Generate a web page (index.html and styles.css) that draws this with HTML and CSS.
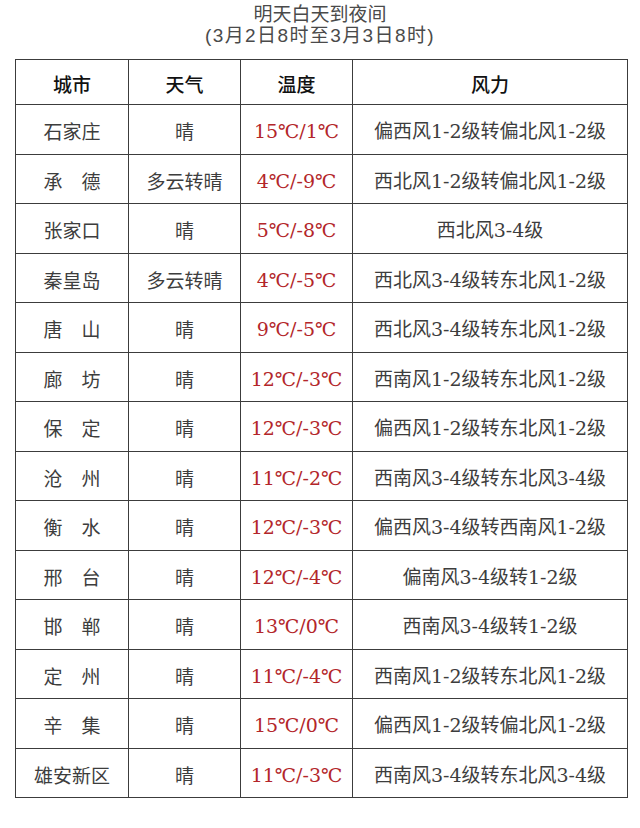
FILE: index.html
```html
<!DOCTYPE html>
<html lang="zh-CN">
<head>
<meta charset="utf-8">
<title>明天白天到夜间</title>
<link rel="stylesheet" href="styles.css">
</head>
<body>
<div class="title">
  <div class="title-main">明天白天到夜间</div>
  <div class="title-sub">(3月2日8时至3月3日8时)</div>
</div>
<table class="weather">
  <colgroup>
    <col class="c-city"><col class="c-sky"><col class="c-temp"><col class="c-wind">
  </colgroup>
  <thead>
    <tr class="head"><th>城市</th><th>天气</th><th>温度</th><th>风力</th></tr>
  </thead>
  <tbody>
    <tr><td>石家庄</td><td>晴</td><td class="temp">15℃/1℃</td><td>偏西风1-2级转偏北风1-2级</td></tr>
    <tr><td>承　德</td><td>多云转晴</td><td class="temp">4℃/-9℃</td><td>西北风1-2级转偏北风1-2级</td></tr>
    <tr><td>张家口</td><td>晴</td><td class="temp">5℃/-8℃</td><td>西北风3-4级</td></tr>
    <tr><td>秦皇岛</td><td>多云转晴</td><td class="temp">4℃/-5℃</td><td>西北风3-4级转东北风1-2级</td></tr>
    <tr><td>唐　山</td><td>晴</td><td class="temp">9℃/-5℃</td><td>西北风3-4级转东北风1-2级</td></tr>
    <tr><td>廊　坊</td><td>晴</td><td class="temp">12℃/-3℃</td><td>西南风1-2级转东北风1-2级</td></tr>
    <tr><td>保　定</td><td>晴</td><td class="temp">12℃/-3℃</td><td>偏西风1-2级转东北风1-2级</td></tr>
    <tr><td>沧　州</td><td>晴</td><td class="temp">11℃/-2℃</td><td>西南风3-4级转东北风3-4级</td></tr>
    <tr><td>衡　水</td><td>晴</td><td class="temp">12℃/-3℃</td><td>偏西风3-4级转西南风1-2级</td></tr>
    <tr><td>邢　台</td><td>晴</td><td class="temp">12℃/-4℃</td><td>偏南风3-4级转1-2级</td></tr>
    <tr><td>邯　郸</td><td>晴</td><td class="temp">13℃/0℃</td><td>西南风3-4级转1-2级</td></tr>
    <tr><td>定　州</td><td>晴</td><td class="temp">11℃/-4℃</td><td>西南风1-2级转东北风1-2级</td></tr>
    <tr><td>辛　集</td><td>晴</td><td class="temp">15℃/0℃</td><td>偏西风1-2级转偏北风1-2级</td></tr>
    <tr><td>雄安新区</td><td>晴</td><td class="temp">11℃/-3℃</td><td>西南风3-4级转东北风3-4级</td></tr>
  </tbody>
</table>
</body>
</html>
```
FILE: styles.css
```css
html, body {
  margin: 0;
  padding: 0;
  background: #ffffff;
}

body {
  width: 640px;
}

.title {
  padding-top: 4px;
  text-align: center;
  font-family: "Liberation Sans", "Noto Sans CJK SC", sans-serif;
  font-size: 19px;
  line-height: 21px;
  color: #4a4a4a;
}

.title-sub {
  letter-spacing: 1.4px;
}

.weather {
  margin: 13px 0 0 15px;
  width: 613px;
  border-collapse: collapse;
  table-layout: fixed;
  font-family: "DejaVu Serif", "Noto Sans CJK SC", serif;
  font-size: 19px;
}

.c-city { width: 113px; }
.c-sky { width: 112px; }
.c-temp { width: 112px; }
.c-wind { width: 275px; }

.weather th,
.weather td {
  border: 1px solid #3c3c3c;
  padding: 0;
  text-align: center;
  vertical-align: middle;
  line-height: 22px;
}

.weather th {
  font-family: "Noto Sans CJK SC", sans-serif;
  font-weight: 500;
  color: #111111;
  padding-top: 4px;
}

.weather td {
  color: #3d3d3d;
  padding-top: 4px;
  font-family: "Noto Sans CJK SC", sans-serif;
}

.weather td.temp,
.weather td:last-child {
  font-family: "DejaVu Serif", "Noto Sans CJK SC", serif;
}

.weather td.temp {
  color: #b3262a;
}

.head {
  height: 45px;
}

.weather tbody tr {
  height: 49.5px;
}
```
